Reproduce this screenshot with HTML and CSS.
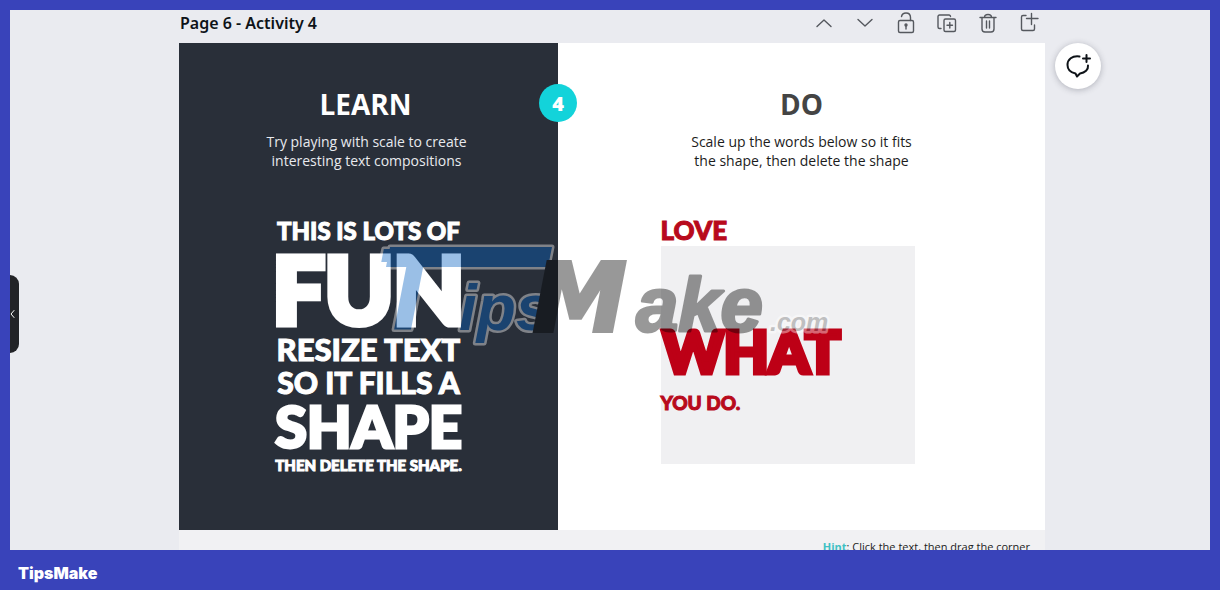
FILE: index.html
```html
<!DOCTYPE html>
<html lang="en">
<head>
<meta charset="utf-8">
<meta name="viewport" content="width=device-width, initial-scale=1">
<title>Page 6 - Activity 4</title>
<link rel="stylesheet" href="styles.css">
</head>
<body>
<main class="editor">
  <button class="drawer" type="button" aria-label="Expand side panel">
    <svg width="6" height="10" viewBox="0 0 6 10"><path d="M4 1.500 1 5l3 3.500"/></svg>
  </button>
  <section class="page">
    <header class="page-head">
      <h1 class="page-title">Page 6 - Activity 4</h1>
      <div class="tools">
        <button type="button" aria-label="Move up"><svg viewBox="0 0 24 24"><path d="M5 15.500l7-6.500 7 6.500"/></svg></button>
        <button type="button" aria-label="Move down"><svg viewBox="0 0 24 24"><path d="M5 8.500l7 6.500 7-6.500"/></svg></button>
        <button type="button" aria-label="Lock"><svg viewBox="0 0 24 24"><rect x="4.500" y="9.500" width="15" height="12" rx="1.500"/><path d="M7.500 5.500C8 3 9.700 2 12 2c3 0 4.500 2 4.500 4.500v3M12 18v-4"/><circle cx="12" cy="14" r="1"/></svg></button>
        <button type="button" aria-label="Duplicate"><svg viewBox="0 0 24 24"><path d="M6 17.500H4.500A1.500 1.500 0 0 1 3 16V5.500A1.500 1.500 0 0 1 4.500 4H14a1.500 1.500 0 0 1 1.500 1.500"/><rect x="9" y="8" width="11.500" height="12.500" rx="1.500"/><path d="M14.800 11.500v5.500M12 14.300h5.500"/></svg></button>
        <button type="button" aria-label="Delete"><svg viewBox="0 0 24 24"><path d="M4 6.500h16M8.500 6.500C8.500 4 9.500 3.500 12 3.500s3.500.5 3.500 3M6 6.500V18a3 3 0 0 0 3 3h6a3 3 0 0 0 3-3V6.500M10.500 10v7M13.500 10v7"/></svg></button>
        <button type="button" aria-label="Add page"><svg viewBox="0 0 24 24"><path d="M9 4.500H6A1.500 1.500 0 0 0 4.500 6v12A1.500 1.500 0 0 0 6 19.500h10a1.500 1.500 0 0 0 1.500-1.500v-4M14.500 2.500v11M9.500 7.500H21"/></svg></button>
      </div>
    </header>
    <article class="slide">
      <section class="half learn">
        <h2>LEARN</h2>
        <p>Try playing with scale to create<br>interesting text compositions</p>
        <div class="poster">
          <span class="line line-m">THIS IS LOTS OF</span>
          <span class="line line-xl">FUN</span>
          <span class="line line-r">RESIZE TEXT</span>
          <span class="line line-f">SO IT FILLS A</span>
          <span class="line line-l">SHAPE</span>
          <span class="line line-s">THEN DELETE THE SHAPE.</span>
        </div>
        <span class="step">4</span>
      </section>
      <section class="half do">
        <h2>DO</h2>
        <p>Scale up the words below so it fits<br>the shape, then delete the shape</p>
        <div class="practice">
          <span class="red red-love">LOVE</span>
          <div class="shape">
            <span class="red red-what">WHAT</span>
            <span class="red red-you">YOU DO.</span>
          </div>
        </div>
      </section>
      <svg class="watermark" viewBox="0 0 866 487" role="img" aria-label="TipsMake.com">
        <defs>
          <g id="mark-t">
            <text class="wm-t" x="194" y="287">T</text>
            <path d="M211 204H373L369 224H207Z"/>
          </g>
        </defs>
        <use href="#mark-t" class="wm-edge"/>
        <use href="#mark-t" class="wm-blue"/>
        <text class="wm-ips" x="280" y="287">ips</text>
        <text class="wm-m" x="354" y="288">M</text>
        <text class="wm-ake" x="457" y="288">ake</text>
        <text class="wm-com" x="591" y="288">.com</text>
      </svg>
    </article>
    <p class="hint"><b>Hint</b>: Click the text, then drag the corner</p>
  </section>
  <button class="comment" type="button" aria-label="Add comment">
    <svg viewBox="0 0 28 28"><path d="M15.500 4.500C8 3.500 3.500 7.500 3.500 13c0 4.500 3.500 7.500 8 8.500l1.500 3 3-3c5-.8 8.500-4 8-8M22.500 3v7M19 6.500h7"/></svg>
  </button>
</main>
<footer class="brand">TipsMake</footer>
</body>
</html>
```
FILE: styles.css
```css
* { box-sizing: border-box; }
body {
  margin: 0;
  height: 100vh;
  display: flex;
  flex-direction: column;
  padding: 10px 10px 0;
  background: #3943ba;
  font-family: "Open Sans", "Noto Sans", sans-serif;
}
h1, h2, p { margin: 0; }
button { border: 0; padding: 0; background: none; cursor: pointer; }
svg { fill: none; stroke: currentColor; stroke-linecap: round; stroke-linejoin: round; }

.editor {
  position: relative;
  flex: 1;
  min-height: 0;
  overflow: hidden;
  display: grid;
  grid-template-columns: 169fr 866fr 165fr;
  align-items: start;
  background: #eaebf0;
}
.drawer {
  align-self: center;
  display: flex;
  align-items: center;
  width: 9px;
  height: 78px;
  margin-top: 60px;
  border-radius: 0 9px 9px 0;
  background: #222327;
  color: #fff;
}
.drawer svg { stroke-width: 1; }

.page-head {
  display: flex;
  align-items: center;
  justify-content: space-between;
  height: 33px;
  padding: 0 4px 7px 1px;
}
.page-title {
  font: 600 16px/24px "Noto Sans", sans-serif;
  color: #0e1318;
}
.tools { display: flex; gap: 17px; }
.tools button { width: 24px; height: 24px; color: #55585e; }
.tools svg { display: block; width: 24px; height: 24px; stroke-width: 1.4; }

.slide {
  position: relative;
  display: grid;
  grid-template-columns: 379fr 487fr;
  min-height: 487px;
  background: #fff;
}
.half {
  display: flex;
  flex-direction: column;
  align-items: center;
  padding-top: 42px;
  text-align: center;
}
.half h2 { font-size: 28px; line-height: 38px; font-weight: 700; }
.half p { margin-top: 9px; font-size: 14px; line-height: 19px; }
.learn { position: relative; background: #292f39; color: #fff; }
.learn h2 { padding-right: 6px; }
.learn p { padding-right: 4px; color: #e8eaee; }
.do h2 { color: #444; }
.do p { color: #1c1c1c; }
.step {
  position: absolute;
  top: 41px;
  right: -19px;
  width: 38px;
  height: 38px;
  border-radius: 50%;
  background: #13d3da;
  font-size: 20px;
  line-height: 40px;
  font-weight: 800;
}

.poster { display: flex; flex-direction: column; align-items: center; margin-top: 48px; }
.line, .red {
  font-family: Lato, sans-serif;
  font-weight: 900;
  white-space: nowrap;
  -webkit-text-stroke: 1px currentColor;
}
.line-m { font-size: 24px; line-height: 26px; }
.line-xl { font-size: 92px; line-height: 90px; -webkit-text-stroke-width: 7px; }
.line-r { font-size: 31px; line-height: 31px; }
.line-f { font-size: 30px; line-height: 34px; }
.line-l { font-size: 58px; line-height: 54px; -webkit-text-stroke-width: 3px; }
.line-s { font-size: 15px; line-height: 24px; }

.practice {
  display: flex;
  flex-direction: column;
  width: 254px;
  margin: 44px 28px 0 0;
  text-align: left;
}
.red { color: #b80a1c; }
.red-love { font-size: 26px; line-height: 32px; }
.shape { display: flex; flex-direction: column; height: 218px; padding-top: 75px; background: #f0f0f2; }
.red-what { padding-left: 2px; font-size: 58px; line-height: 60px; color: #bd0016; -webkit-text-stroke-width: 5px; }
.red-you { font-size: 19px; line-height: 44px; }

.watermark { position: absolute; inset: 0; width: 100%; height: 100%; opacity: .4; pointer-events: none; }
.watermark text { font-family: "Liberation Sans", Arial, sans-serif; font-weight: 700; font-style: italic; }
.wm-edge { fill: #fff; stroke: #fff; stroke-width: 5; }
.wm-blue { fill: #0561c3; stroke: none; }
.wm-t { font-size: 117px; }
.watermark .wm-ips, .watermark .wm-com { stroke: #fff; stroke-width: 5; paint-order: stroke; }
.watermark .wm-ips { font-size: 64px; fill: #0561c3; }
.watermark .wm-m { font-family: "DejaVu Sans", sans-serif; font-size: 94px; fill: #000; stroke: #000; stroke-width: 4; stroke-linejoin: miter; }
.watermark .wm-ake { font-size: 76px; fill: #000; stroke: #000; stroke-width: 3; }
.watermark .wm-com { font-size: 25px; fill: #777; }

.hint {
  padding: 7px 15px 0 0;
  background: #f1f1f3;
  font-size: 11px;
  line-height: 20px;
  text-align: right;
  color: #1c1c1c;
}
.hint b { color: #3fc1c4; }

.comment {
  width: 46px;
  height: 46px;
  margin: 33px 0 0 10px;
  display: grid;
  place-items: center;
  border-radius: 50%;
  background: #fff;
  color: #0e1318;
  box-shadow: 0 1px 6px rgba(40, 44, 60, .3);
}
.comment svg { width: 28px; height: 28px; stroke-width: 2; }
.brand {
  height: 40px;
  padding: 3px 8px 0;
  font: 900 16px/40px Inter, sans-serif;
  color: #fff;
}
```
